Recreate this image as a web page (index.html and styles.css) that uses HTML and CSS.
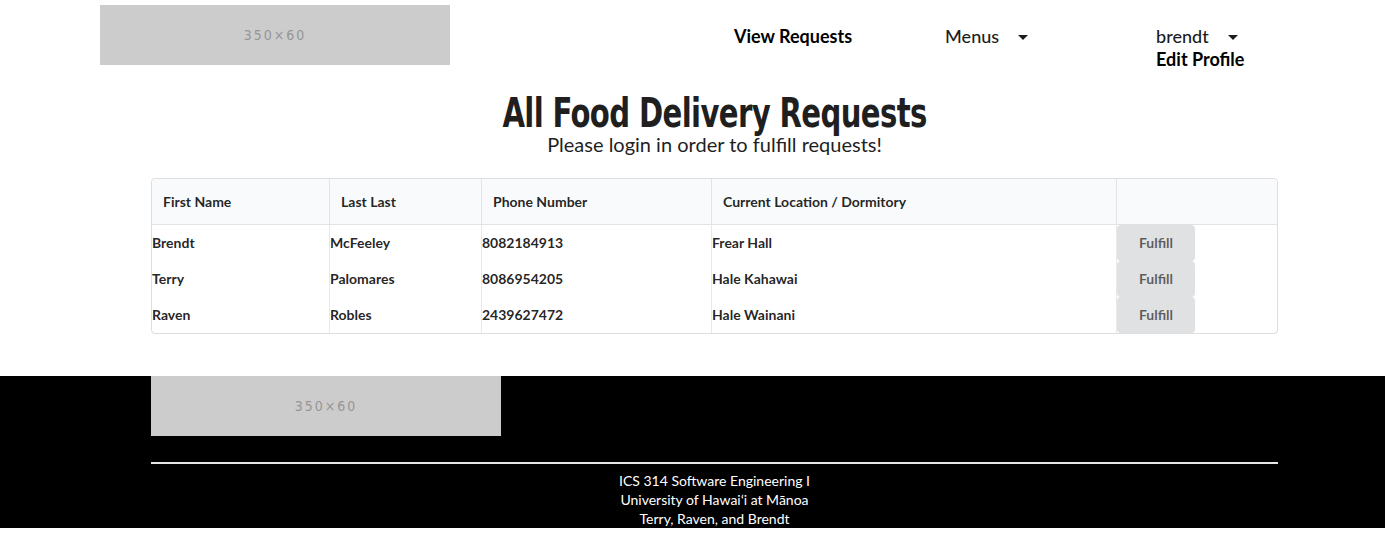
FILE: index.html
```html
<!DOCTYPE html>
<html>
<head>
<meta charset="utf-8">
<link rel="stylesheet" href="styles.css">
</head>
<body>
<header class="nav">
  <div class="ph ph-nav">350×60</div>
  <a class="nav-item bold item-view">View Requests</a>
  <div class="nav-item item-menus">Menus <span class="caret caret-menus"></span></div>
  <div class="user">
    <div class="nav-item">brendt <span class="caret caret-user"></span></div>
    <a class="nav-item bold">Edit Profile</a>
  </div>
</header>

<main class="main">
  <h1 class="title"><span class="title-text">All Food Delivery Requests</span></h1>
  <p class="subtitle">Please login in order to fulfill requests!</p>
  <table class="tbl">
    <thead>
      <tr>
        <th class="c1">First Name</th>
        <th class="c2">Last Last</th>
        <th class="c3">Phone Number</th>
        <th class="c4">Current Location / Dormitory</th>
        <th class="c5"></th>
      </tr>
    </thead>
    <tbody>
      <tr><td>Brendt</td><td>McFeeley</td><td>8082184913</td><td>Frear Hall</td><td class="act"><button class="btn">Fulfill</button></td></tr>
      <tr><td>Terry</td><td>Palomares</td><td>8086954205</td><td>Hale Kahawai</td><td class="act"><button class="btn">Fulfill</button></td></tr>
      <tr><td>Raven</td><td>Robles</td><td>2439627472</td><td>Hale Wainani</td><td class="act"><button class="btn">Fulfill</button></td></tr>
    </tbody>
  </table>
</main>

<footer class="footer">
  <div class="footer-inner">
    <div class="ph ph-foot">350×60</div>
    <hr class="rule">
    <div class="credits">
      <div>ICS 314 Software Engineering I</div>
      <div>University of Hawaiʻi at Mānoa</div>
      <div>Terry, Raven, and Brendt</div>
    </div>
  </div>
</footer>
</body>
</html>
```

FILE: styles.css
```css
* { box-sizing: border-box; }
html, body { margin: 0; padding: 0; }
body {
  font-family: Lato, "Open Sans", sans-serif;
  color: rgba(0,0,0,.87);
  background: #fff;
  width: 1385px;
  overflow: hidden;
}

.ph {
  width: 350px;
  height: 60px;
  background: #cccccc;
  color: #969696;
  display: flex;
  align-items: center;
  justify-content: center;
  font-family: "DejaVu Sans Condensed", sans-serif;
  font-size: 14px;
  letter-spacing: 2px;
}

.nav {
  display: flex;
  align-items: flex-start;
  padding: 5px 0 0 100px;
  height: 88px;
}
.nav-item {
  font-size: 18px;
  line-height: 23px;
  color: #1b1c1d;
  font-weight: 500;
  display: flex;
  align-items: center;
  text-decoration: none;
}
.bold { font-weight: 700; color: #000; }
.item-view { margin: 20px 0 0 284px; }
.item-menus { margin: 20px 0 0 93px; }
.user { margin: 20px 0 0 128px; display: flex; flex-direction: column; }
.caret {
  display: inline-block;
  width: 0; height: 0;
  border-left: 5px solid transparent;
  border-right: 5px solid transparent;
  border-top: 5px solid #1b1c1d;
  margin-top: 1px;
}
.caret-menus { margin-left: 19px; }
.caret-user { margin-left: 19px; }

.main {
  margin-left: 151px;
  width: 1127px;
  padding-bottom: 42px;
}
.title {
  margin: 0;
  padding-top: 5px;
  text-align: center;
  font-family: "DejaVu Sans Condensed", "DejaVu Sans", sans-serif;
  font-weight: 700;
  font-size: 41px;
  line-height: 38px;
  color: #1f1f1f;
}
.title-text {
  display: inline-block;
  letter-spacing: -0.8px;
  transform: scaleX(0.79);
  white-space: nowrap;
  margin-top: 1px;
}
.subtitle {
  margin: 0;
  text-align: center;
  font-size: 20px;
  line-height: 24px;
  color: #1f1f1f;
}
.tbl {
  margin-top: 22px;
  width: 1127px;
  border: 1px solid rgba(34,36,38,.15);
  border-radius: 4px;
  border-spacing: 0;
  border-collapse: separate;
  font-size: 14px;
  font-weight: 700;
  color: rgba(0,0,0,.87);
}
.tbl th {
  background: #f9fafb;
  text-align: left;
  height: 46px;
  padding: 0 11px 1px;
  border-bottom: 1px solid rgba(34,36,38,.1);
  border-left: 1px solid rgba(34,36,38,.1);
}
.tbl th:first-child { border-left: none; border-top-left-radius: 4px; }
.tbl th:last-child { border-top-right-radius: 4px; }
.tbl td {
  height: 36px;
  padding: 0 0 1px;
  border-left: 1px solid rgba(34,36,38,.1);
}
.tbl td:first-child { border-left: none; }
.tbl td.act { padding: 0; }
.c1 { width: 177px; }
.c2 { width: 152px; }
.c3 { width: 230px; }
.c4 { width: 405px; }
.btn {
  display: block;
  width: 78px;
  height: 36px;
  border: none;
  border-radius: 4px;
  background: #e0e1e2;
  color: rgba(0,0,0,.6);
  font-family: Lato, sans-serif;
  font-weight: 700;
  font-size: 14px;
  padding: 0 0 1px;
}

.footer {
  background: #000;
  height: 152px;
}
.footer-inner {
  margin-left: 151px;
  width: 1127px;
}
.rule {
  margin: 26px 0 0;
  border: none;
  border-top: 2px solid #e6e6e6;
  height: 0;
}
.credits {
  padding-top: 7px;
  text-align: center;
  color: #fff;
  font-size: 14px;
  line-height: 19px;
}
```
